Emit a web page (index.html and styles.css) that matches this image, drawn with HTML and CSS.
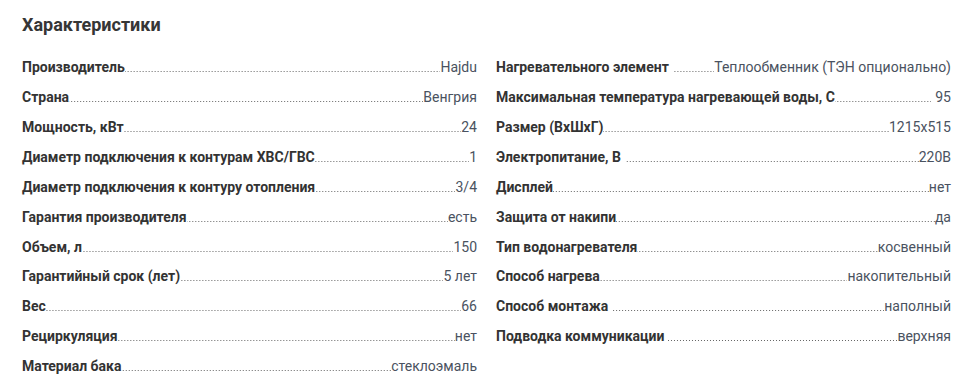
FILE: index.html
```html
<!DOCTYPE html>
<html lang="ru">
<head>
<meta charset="utf-8">
<title>Характеристики</title>
<link rel="stylesheet" href="styles.css">
</head>
<body>
<section class="specs">
  <h2 class="specs-title">Характеристики</h2>
  <div class="specs-grid">
    <div class="specs-col">
      <div class="row"><span class="name">Производитель</span><span class="dots"></span><span class="val">Hajdu</span></div>
      <div class="row"><span class="name">Страна</span><span class="dots"></span><span class="val">Венгрия</span></div>
      <div class="row"><span class="name">Мощность, кВт</span><span class="dots"></span><span class="val">24</span></div>
      <div class="row"><span class="name">Диаметр подключения к контурам ХВС/ГВС</span><span class="dots"></span><span class="val">1</span></div>
      <div class="row"><span class="name">Диаметр подключения к контуру отопления</span><span class="dots"></span><span class="val">3/4</span></div>
      <div class="row"><span class="name">Гарантия производителя</span><span class="dots"></span><span class="val">есть</span></div>
      <div class="row"><span class="name">Объем, л</span><span class="dots"></span><span class="val">150</span></div>
      <div class="row"><span class="name">Гарантийный срок (лет)</span><span class="dots"></span><span class="val">5 лет</span></div>
      <div class="row"><span class="name">Вес</span><span class="dots"></span><span class="val">66</span></div>
      <div class="row"><span class="name">Рециркуляция</span><span class="dots"></span><span class="val">нет</span></div>
      <div class="row"><span class="name">Материал бака</span><span class="dots"></span><span class="val">стеклоэмаль</span></div>
    </div>
    <div class="specs-col">
      <div class="row"><span class="name sp">Нагревательного элемент</span><span class="dots"></span><span class="val">Теплообменник (ТЭН опционально)</span></div>
      <div class="row"><span class="name">Максимальная температура нагревающей воды, С</span><span class="dots"></span><span class="val sp-l">95</span></div>
      <div class="row"><span class="name">Размер (ВхШхГ)</span><span class="dots"></span><span class="val">1215x515</span></div>
      <div class="row"><span class="name sp">Электропитание, В</span><span class="dots"></span><span class="val">220В</span></div>
      <div class="row"><span class="name">Дисплей</span><span class="dots"></span><span class="val">нет</span></div>
      <div class="row"><span class="name">Защита от накипи</span><span class="dots"></span><span class="val">да</span></div>
      <div class="row"><span class="name">Тип водонагревателя</span><span class="dots"></span><span class="val">косвенный</span></div>
      <div class="row"><span class="name">Способ нагрева</span><span class="dots"></span><span class="val">накопительный</span></div>
      <div class="row"><span class="name sp">Способ монтажа</span><span class="dots"></span><span class="val">наполный</span></div>
      <div class="row"><span class="name sp">Подводка коммуникации</span><span class="dots"></span><span class="val">верхняя</span></div>
    </div>
  </div>
</section>
</body>
</html>
```
FILE: styles.css
```css
html, body {
  margin: 0;
  padding: 0;
  background: #fff;
}
body {
  font-family: Roboto, "Noto Sans", Arial, sans-serif;
  color: #333;
}
.specs {
  padding: 14px 0 0 22px;
  width: 929px;
}
.specs-title {
  margin: 0;
  font-size: 18px;
  line-height: 22px;
  font-weight: 700;
  color: #363636;
}
.specs-grid {
  display: grid;
  grid-template-columns: 455px 455px;
  column-gap: 19px;
  margin-top: 21.2px;
}
.row {
  display: flex;
  align-items: baseline;
  font-size: 14px;
  line-height: 20px;
  margin-bottom: 9.9px;
  white-space: nowrap;
}
.name {
  font-weight: 700;
  color: #333;
}
.name.sp {
  margin-right: 4px;
}
.dots {
  flex: 1;
  height: 1px;
  min-width: 10px;
  background-image: linear-gradient(to right, transparent 2px, #666 2px);
  background-size: 3px 1px;
  background-repeat: repeat-x;
  background-position: right bottom;
}
.val {
  color: #4a5260;
}
.val.sp-l {
  margin-left: 4px;
}
```
